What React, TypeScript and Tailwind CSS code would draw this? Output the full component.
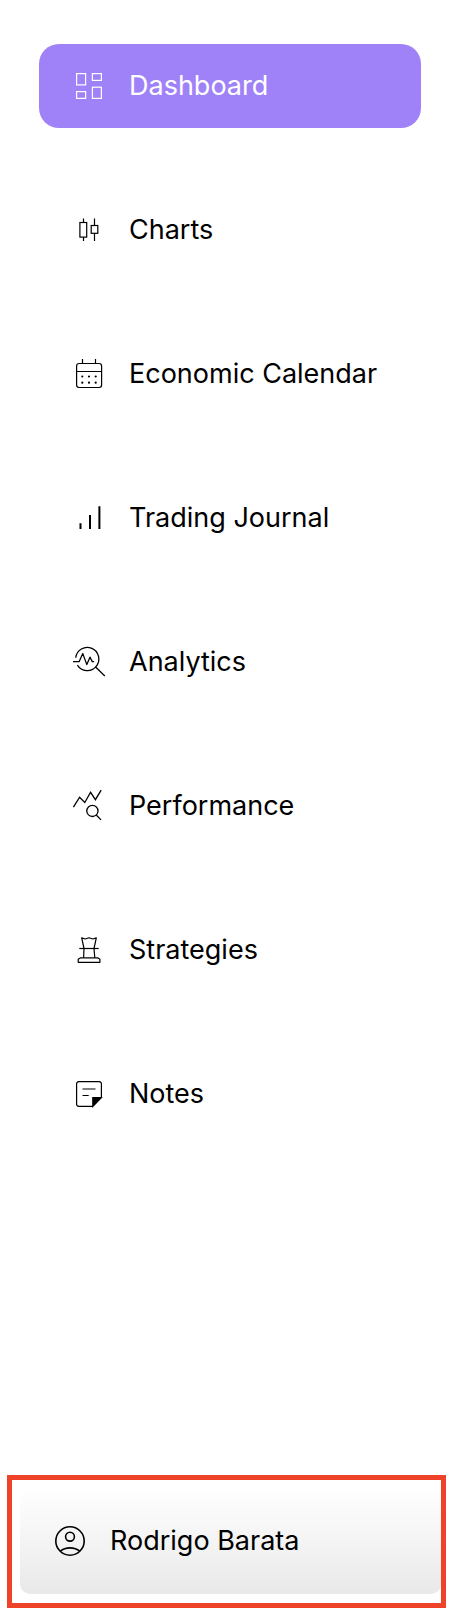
import type { ReactNode } from "react";

function Icon({ children, width = 1.2 }: { children: ReactNode; width?: number }) {
  return (
    <svg
      viewBox="0 0 36 36"
      className="size-9 shrink-0"
      fill="none"
      stroke="currentColor"
      strokeWidth={width}
      aria-hidden="true"
    >
      {children}
    </svg>
  );
}

const items: { label: string; icon: ReactNode }[] = [
  {
    label: "Dashboard",
    icon: (
      <Icon>
        <rect x="5.6" y="5.6" width="9" height="11.3" />
        <rect x="21.4" y="5.6" width="9" height="6.8" />
        <rect x="5.6" y="23.6" width="9" height="6.8" />
        <rect x="21.4" y="19.2" width="9" height="11.2" />
      </Icon>
    ),
  },
  {
    label: "Charts",
    icon: (
      <Icon>
        <rect x="8.9" y="10.5" width="6.8" height="14.6" />
        <rect x="20.2" y="13.5" width="6.6" height="7.8" />
        <path d="M12.5 6.6v3.9M12.5 25.1v4M23.5 6.6v6.9M23.5 21.3v7.8" />
      </Icon>
    ),
  },
  {
    label: "Economic Calendar",
    icon: (
      <Icon>
        <rect x="5.6" y="7.5" width="25" height="24" rx="2.4" />
        <path d="M5.6 15.5h25M11.5 3v4.5M24.5 3v4.5" />
        <g fill="currentColor" stroke="none">
          <circle cx="11.3" cy="20.5" r="1.1" />
          <circle cx="18" cy="20.5" r="1.1" />
          <circle cx="24.7" cy="20.5" r="1.1" />
          <circle cx="11.3" cy="26.7" r="1.1" />
          <circle cx="18" cy="26.7" r="1.1" />
          <circle cx="24.7" cy="26.7" r="1.1" />
        </g>
      </Icon>
    ),
  },
  {
    label: "Trading Journal",
    icon: (
      <Icon width={2}>
        <path d="M9.5 23.2v5.8M19 15v14M28.4 6.3V29" />
      </Icon>
    ),
  },
  {
    label: "Analytics",
    icon: (
      <Icon width={1.3}>
        <path d="M4.7 13.8A11.6 11.6 0 1 1 6.4 21.2" />
        <path d="M2 17.6h6.2L11.8 9.6l4 11 3.2-7.4 2.3 4.4h1.8" strokeLinejoin="round" />
        <path d="M24.3 22.8 33.8 32" />
      </Icon>
    ),
  },
  {
    label: "Performance",
    icon: (
      <Icon width={1.3}>
        <path d="M2.4 19.2 8.6 9.2l5.2 5.3 5.8-10.2 4.8 7.4L30.2 2.2" />
        <circle cx="21.4" cy="22.9" r="5.6" />
        <path d="m25.3 27 4.7 4.9" />
      </Icon>
    ),
  },
  {
    label: "Strategies",
    icon: (
      <Icon>
        <path d="M12.6 25.8 13 16.5 10.7 5.9l3.5 1.1 3.8-1.3 3.8 1.3 3.5-1.1L23 16.5l.8 9.3" strokeLinejoin="round" />
        <path d="M8.3 16.5h19.4" />
        <path d="M9.6 25.8h17l2.3 1.5v3H7.2v-3z" strokeLinejoin="round" />
      </Icon>
    ),
  },
  {
    label: "Notes",
    icon: (
      <Icon>
        <path d="M30.4 21.5V7.8a2.2 2.2 0 0 0-2.2-2.2H7.8a2.2 2.2 0 0 0-2.2 2.2v20.4a2.2 2.2 0 0 0 2.2 2.2h14" />
        <path d="M11.5 13h13M11.5 19.5h6.2" />
        <path d="M21.8 30.4v-8.9h8.6z" fill="currentColor" />
      </Icon>
    ),
  },
];

export default function App() {
  return (
    <div className="flex min-h-screen flex-col bg-white pt-11 pb-1.5 font-['Inter','Liberation_Sans',sans-serif] text-[27px] leading-9 text-black">
      <nav aria-label="Main" className="pr-[37px] pl-[39px]">
        <ul className="flex flex-col gap-[60px]">
          {items.map(({ label, icon }, index) => (
            <li key={label}>
              <a
                href="#"
                aria-current={index === 0 ? "page" : undefined}
                className={
                  index === 0
                    ? "flex items-center gap-[22px] rounded-[20px] bg-[#a082f8] px-8 py-6 text-white"
                    : "flex items-center gap-[22px] rounded-[20px] px-8 py-6"
                }
              >
                {icon}
                <span className="whitespace-nowrap">{label}</span>
              </a>
            </li>
          ))}
        </ul>
      </nav>
      <div className="mt-auto mr-3 ml-[7px] border-5 border-[#ee4328] pt-2 pb-[9px] pl-2">
        <button
          type="button"
          className="flex w-full items-center gap-[22px] rounded-[10px] bg-linear-to-b from-white to-[#e9e9e9] px-8 py-[35px] text-left"
        >
          <Icon width={1.6}>
            <circle cx="18" cy="18" r="14.2" />
            <circle cx="18" cy="13.7" r="4.4" />
            <path d="M8.3 28.2C13.5 23.7 22.5 23.7 27.7 28.2" />
          </Icon>
          <span className="whitespace-nowrap">Rodrigo Barata</span>
        </button>
      </div>
    </div>
  );
}
